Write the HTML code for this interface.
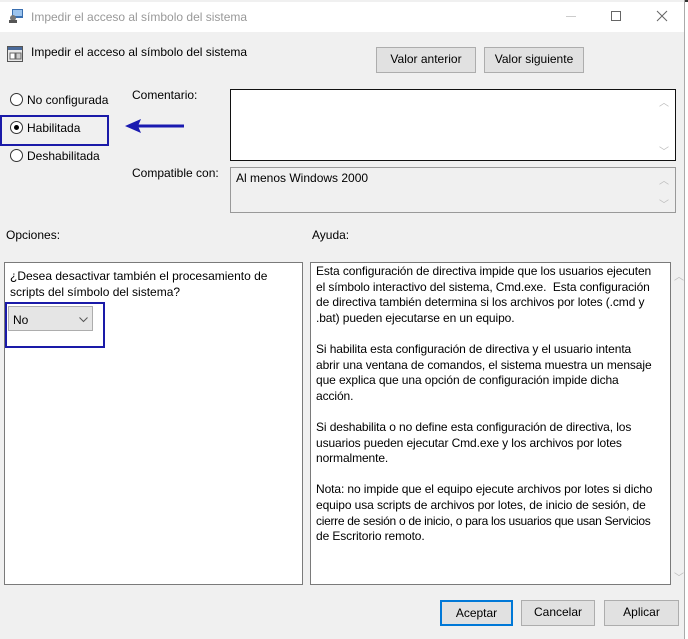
<!DOCTYPE html>
<html><head><meta charset="utf-8"><style>
*{box-sizing:border-box;margin:0;padding:0}
body{width:688px;height:639px;background:#fff;font-family:"Liberation Sans",sans-serif;font-size:12px;color:#000;position:relative;overflow:hidden}
.a{position:absolute}
.win{left:0;top:0;width:685px;height:639px;background:#f0f0f0;border-right:1px solid #aaa}
.tb{left:0;top:2px;width:684px;height:30px;background:#fff}
.btn{position:absolute;background:#e1e1e1;border:1px solid #adadad;text-align:center;line-height:23px;font-size:12px}
.ta{position:absolute;background:#fff;border:1px solid #7a7a7a}
.radio{position:absolute;width:13px;height:13px;border:1px solid #333;border-radius:50%;background:#fff}
.sb{position:absolute;color:#bbb;font-size:10px}
</style></head><body>
<div class="a" style="left:0;top:0;width:688px;height:2px;background:#333"></div>
<div class="a win"></div>
<div class="a tb"></div>
<svg class="a" style="left:8px;top:8px" width="16" height="16"><rect x="4" y="1" width="11" height="9" fill="#3a6fb0"/><rect x="5" y="2" width="9" height="6" fill="#9cc4ee"/><circle cx="5" cy="10" r="3" fill="#777"/><rect x="1" y="12" width="8" height="3" fill="#555"/></svg>
<div class="a" style="left:31px;top:10px;color:#999;font-size:12px">Impedir el acceso al símbolo del sistema</div>
<div class="a" style="left:566px;top:16px;width:10px;height:1px;background:#ccc"></div>
<div class="a" style="left:611px;top:11px;width:10px;height:10px;border:1px solid #666"></div>
<svg class="a" style="left:656px;top:10px" width="12" height="12"><path d="M1 1L11 11M11 1L1 11" stroke="#666" stroke-width="1"/></svg>

<svg class="a" style="left:7px;top:46px" width="16" height="16"><rect x="0.5" y="0.5" width="15" height="15" fill="#e8e8e8" stroke="#555"/><rect x="1" y="1" width="14" height="3" fill="#4a6a9a"/><rect x="3" y="7" width="5" height="6" fill="#fff" stroke="#666"/><rect x="9" y="7" width="5" height="6" fill="#ccc" stroke="#666"/></svg>
<div class="a" style="left:31px;top:45px">Impedir el acceso al símbolo del sistema</div>
<div class="btn" style="left:376px;top:47px;width:100px;height:26px">Valor anterior</div>
<div class="btn" style="left:484px;top:47px;width:100px;height:26px">Valor siguiente</div>

<div class="radio" style="left:10px;top:93px"></div>
<div class="a" style="left:27px;top:93px">No configurada</div>
<div class="radio" style="left:10px;top:121px"><div class="a" style="left:3px;top:3px;width:5px;height:5px;border-radius:50%;background:#000"></div></div>
<div class="a" style="left:27px;top:121px">Habilitada</div>
<div class="radio" style="left:10px;top:149px"></div>
<div class="a" style="left:27px;top:149px">Deshabilitada</div>
<div class="a" style="left:0;top:115px;width:109px;height:31px;border:2px solid #1a1aa8"></div>
<svg class="a" style="left:122px;top:117px" width="64" height="18"><path d="M62 9H14" stroke="#1a1ab0" stroke-width="3"/><path d="M3 9L19 2L16 9L19 16Z" fill="#1a1ab0"/></svg>

<div class="a" style="left:132px;top:88px">Comentario:</div>
<div class="ta" style="left:230px;top:89px;width:446px;height:72px;border-color:#111"></div>
<div class="sb" style="left:659px;top:94px">︿</div><div class="sb" style="left:659px;top:143px">﹀</div>
<div class="a" style="left:132px;top:166px">Compatible con:</div>
<div class="ta" style="left:230px;top:167px;width:446px;height:46px;background:#f0f0f0;border-color:#999"></div>
<div class="a" style="left:236px;top:171px">Al menos Windows 2000</div>
<div class="sb" style="left:659px;top:172px">︿</div><div class="sb" style="left:659px;top:196px">﹀</div>

<div class="a" style="left:6px;top:228px">Opciones:</div>
<div class="a" style="left:312px;top:228px">Ayuda:</div>

<div class="ta" style="left:4px;top:262px;width:299px;height:323px"></div>
<div class="a" style="left:10px;top:269px;line-height:15.6px;width:280px">¿Desea desactivar también el procesamiento de scripts del símbolo del sistema?</div>
<div class="a" style="left:8px;top:306px;width:85px;height:25px;background:#e5e5e5;border:1px solid #adadad;padding:6px 0 0 4px">No<svg class="a" style="left:70px;top:10px" width="9" height="6"><path d="M0.5 0.5L4.5 4.5L8.5 0.5" stroke="#555" fill="none"/></svg></div>
<div class="a" style="left:5px;top:302px;width:100px;height:46px;border:2px solid #1a1aa8"></div>

<div class="ta" style="left:310px;top:262px;width:361px;height:323px"></div>
<div class="a" style="left:316px;top:264px;width:350px;line-height:15.6px;white-space:nowrap;letter-spacing:-0.1px">Esta configuración de directiva impide que los usuarios ejecuten<br>el símbolo interactivo del sistema, Cmd.exe.&nbsp; Esta configuración<br>de directiva también determina si los archivos por lotes (.cmd y<br>.bat) pueden ejecutarse en un equipo.<br><br>Si habilita esta configuración de directiva y el usuario intenta<br>abrir una ventana de comandos, el sistema muestra un mensaje<br>que explica que una opción de configuración impide dicha<br>acción.<br><br>Si deshabilita o no define esta configuración de directiva, los<br>usuarios pueden ejecutar Cmd.exe y los archivos por lotes<br>normalmente.<br><br>Nota: no impide que el equipo ejecute archivos por lotes si dicho<br>equipo usa scripts de archivos por lotes, de inicio de sesión, de<br><span style="letter-spacing:-0.3px">cierre de sesión o de inicio, o para los usuarios que usan Servicios</span><br>de Escritorio remoto.</div>
<div class="sb" style="left:674px;top:268px">︿</div><div class="sb" style="left:674px;top:569px">﹀</div>

<div class="btn" style="left:440px;top:600px;width:73px;height:26px;border:2px solid #0078d7;line-height:22px">Aceptar</div>
<div class="btn" style="left:521px;top:600px;width:74px;height:26px">Cancelar</div>
<div class="btn" style="left:604px;top:600px;width:75px;height:26px">Aplicar</div>
</body></html>
